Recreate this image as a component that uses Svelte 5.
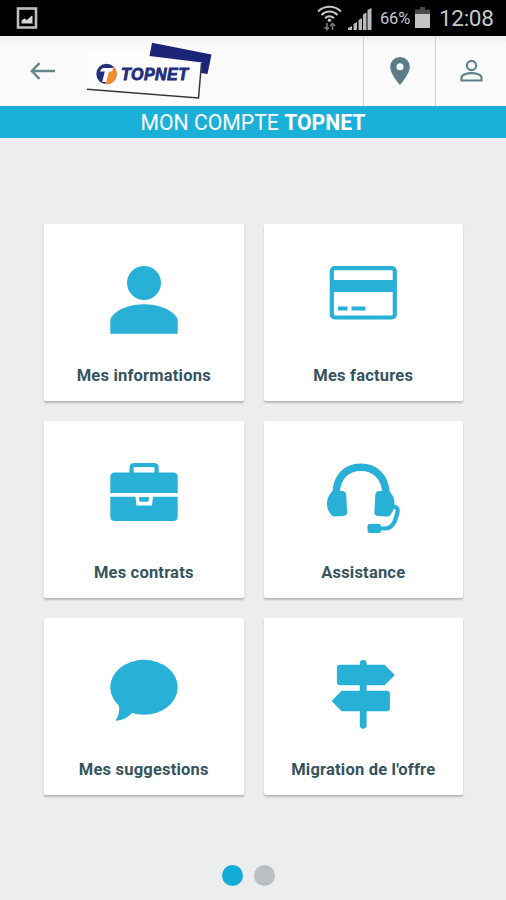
<script lang="ts">
  type IconName = 'user' | 'card' | 'briefcase' | 'headset' | 'bubble' | 'signpost';

  interface Tile {
    label: string;
    icon: IconName;
  }

  const tiles: Tile[] = [
    { label: 'Mes informations', icon: 'user' },
    { label: 'Mes factures', icon: 'card' },
    { label: 'Mes contrats', icon: 'briefcase' },
    { label: 'Assistance', icon: 'headset' },
    { label: 'Mes suggestions', icon: 'bubble' },
    { label: "Migration de l'offre", icon: 'signpost' },
  ];

  let page = $state(0);
</script>

<div class="screen">
  <div class="status-bar">
    <svg class="picture" width="22" height="24" viewBox="0 0 22 24">
      <rect x="2" y="2.500" width="18" height="19" fill="none" stroke="#bdbdbd" stroke-width="2.600" />
      <path d="M5.500 17.500v-3l3-2 2.500 1.500 5-4.500.5.500v7.500z" fill="#d5d5d5" />
    </svg>
    <div class="status-right">
      <svg class="wifi" width="26" height="26" viewBox="0 0 26 26">
        <g fill="none" stroke="#c4c4c4" stroke-width="2">
          <path d="M1 6.500C7.500.2 17.500.2 24 6.500" />
          <path d="M4.500 10c4.500-4.600 11.500-4.600 16 0" />
          <path d="M8 13.300c2.500-2.700 6.500-2.700 9 0" />
        </g>
        <circle cx="12.500" cy="15.200" r="1.700" fill="#c4c4c4" />
        <path d="M10 18v6.500M7.500 22l2.500 2.500 2-2M15.500 25v-6.500M13 21l2.500-2.500 2.500 2.500" fill="none" stroke="#777" stroke-width="1.600" />
      </svg>
      <svg class="signal" width="26" height="24" viewBox="0 0 26 24">
        <path d="M1 24v-2l4-2v4zM6.500 24v-6l3.500-2v8zM11.500 24V14l3.500-2v12zM16 24V8.500l3.500-2V24zM20.500 24V4l4-2v22z" fill="#b9b9b9" />
      </svg>
      <span class="percent">66%</span>
      <svg class="battery" width="15" height="22" viewBox="0 0 15 22">
        <path d="M5 0h5v2.500h5V7H0V2.500h5z" fill="#4a4a4a" />
        <path d="M0 7h15v14H0z" fill="#c4c4c4" />
      </svg>
      <span class="clock">12:08</span>
    </div>
  </div>

  <header class="toolbar">
    <button class="back" type="button" aria-label="Retour">
      <svg width="26" height="18" viewBox="0 0 26 18">
        <path d="M25 9H2M9.500 1.200L1.800 9l7.700 7.800" fill="none" stroke="#64868e" stroke-width="2.400" />
      </svg>
    </button>
    <svg class="logo" width="130" height="60" viewBox="0 0 130 60">
      <path d="M1 10H64V15L115 20 113 56 1 48z" fill="#fdfdfd" />
      <path d="M66 1.800L125.500 13.500 121.500 33 115 32 116 21.500 63.500 15z" fill="#1c2478" />
      <path d="M1 48.200L112.500 57 115.500 22" fill="none" stroke="#373737" stroke-width="1.500" />
      <circle cx="20.500" cy="33" r="10.200" fill="#232d7b" />
      <path d="M27.500 25.600A10.200 10.200 0 0 1 19 43.100L22.500 31z" fill="#f28c2c" />
      <path d="M14 30.500q1-3.500 4-3.500h9l-.8 3.500h-3.200l-2.800 10.500h-4l2.600-10.500z" fill="#fff" />
      <text x="35" y="39.300" textLength="67" lengthAdjust="spacing">TOPNET</text>
    </svg>
    <div class="actions">
      <button type="button" aria-label="Agences">
        <svg width="20" height="28" viewBox="0 0 20 28">
          <path d="M10 0A9.800 9.800 0 0 0 .2 9.800C.2 17.200 10 28 10 28s9.800-10.800 9.800-18.200A9.800 9.800 0 0 0 10 0zm0 13.300a3.500 3.500 0 1 1 0-7 3.500 3.500 0 0 1 0 7z" fill="#5b7c88" />
        </svg>
      </button>
      <button type="button" aria-label="Profil">
        <svg width="24" height="24" viewBox="0 0 24 24">
          <circle cx="12.500" cy="6.500" r="4.600" fill="none" stroke="#5f838b" stroke-width="2.200" />
          <path d="M2.500 21.500v-3c0-3 6-4.300 10-4.300s10 1.300 10 4.300v3z" fill="none" stroke="#5f838b" stroke-width="2.200" />
        </svg>
      </button>
    </div>
  </header>

  <h1 class="banner">MON COMPTE <b>TOPNET</b></h1>

  <main class="tiles">
    {#each tiles as tile}
      <button class="tile" type="button">
        <svg class="icon" width="80" height="80" viewBox="0 0 80 80">
          {#if tile.icon === 'user'}
            <circle cx="40" cy="23" r="17" />
            <path d="M6.300 73.700V60q0-2 1.500-3.300C14 48.500 27 44.300 40 44.300s26 4.200 32.200 12.400q1.500 1.300 1.500 3.300v13.700z" />
          {:else if tile.icon === 'card'}
            <rect class="line" x="8.800" y="8.200" width="63" height="49.300" rx="3" />
            <path d="M7.500 20h65v12H7.500zM15 46.500h9.500v4H15zM28.500 46.500h14v4h-14z" />
          {:else if tile.icon === 'briefcase'}
            <path d="M6.300 36V20q0-4.500 4.500-4.500h58.400q4.500 0 4.500 4.500v16zM6.300 39.800H31.500L32.500 48.500H48l1-8.700h24.700V59.500q0 4.500-4.500 4.500H10.800q-4.500 0-4.500-4.500z" />
            <path d="M35 40h10l-.5 4.700h-9z" />
            <path class="line" d="M27.600 16.500V10.500q0-2.500 2.500-2.500h20q2.500 0 2.500 2.500v6" />
          {:else if tile.icon === 'headset'}
            <g transform="translate(1 0)">
              <path class="line band" d="M12 36C13 20 22 10.200 36.800 10.200S61 20 62 36" />
              <path d="M10.500 34H18q4 0 4.300 4l.8 17q.1 4-4 4l-8.500.5q-3 0-4-2.500Q3 53 3 46.500q0-5.500 3-9.500 1.500-3 4.500-3z" />
              <path d="M63 34h-7.500q-4 0-4.200 4l-.9 17q-.1 4 4 4l8.500.5q3 0 4-2.500Q70.500 53 70.500 46.500q0-5.500-3-9.500-1.500-3-4.500-3z" />
              <path class="line" d="M68.500 49.500c4 0 5.700 2 5 5.500C71.500 64 69 71.500 60.500 71.500H54" />
              <rect x="43.500" y="67" width="13.500" height="9" rx="2.200" />
            </g>
          {:else if tile.icon === 'bubble'}
            <ellipse cx="40" cy="33.300" rx="33.700" ry="27.500" />
            <path d="M13 48c3 3 3.500 11-1.500 18.700C18 66.500 23.500 64 28.500 58.500z" />
          {:else}
            <g transform="translate(.6 0)">
              <rect x="36.200" y="6" width="6.800" height="68.700" rx="3.400" />
              <path d="M16.300 10.700H61L71.300 21 61 31.300H16.300q-3 0-3-3V13.700q0-3 3-3zM63.300 36.700H18L8 47l10 10.300h45.300q3 0 3-3V39.700q0-3-3-3z" />
            </g>
          {/if}
        </svg>
        <span class="label">{tile.label}</span>
      </button>
    {/each}
  </main>

  <nav class="dots">
    {#each [0, 1] as n}
      <button class="dot" class:active={page === n} type="button" aria-label="Page {n + 1}" onclick={() => (page = n)}></button>
    {/each}
  </nav>
</div>

<style>
  :global(body) {
    margin: 0;
  }

  .screen {
    display: flex;
    flex-direction: column;
    width: 506px;
    height: 900px;
    overflow: hidden;
    background: #ebedef;
    font-family: Roboto, 'Liberation Sans', sans-serif;
  }

  button {
    padding: 0;
    border: 0;
    background: none;
    font: inherit;
  }

  svg {
    display: block;
    flex-shrink: 0;
  }

  .status-bar {
    display: flex;
    align-items: center;
    justify-content: space-between;
    height: 36px;
    flex-shrink: 0;
    padding: 0 11px 0 16px;
    background: #000;
    color: #c8c8c8;
  }

  .status-right {
    display: flex;
    align-items: center;
  }

  .signal {
    margin-left: 4px;
  }

  .percent {
    margin-left: 7px;
    width: 32px;
    font-size: 16.5px;
    letter-spacing: -0.2px;
  }

  .battery {
    margin-left: 3px;
  }

  .clock {
    margin-left: 9px;
    width: 56px;
    font-size: 22.5px;
    letter-spacing: -0.3px;
  }

  .toolbar {
    display: flex;
    align-items: stretch;
    height: 70px;
    flex-shrink: 0;
    background: linear-gradient(#ededed, #fafafa 8px);
  }

  .back {
    display: flex;
    align-items: center;
    padding-left: 30px;
  }

  .logo {
    align-self: flex-start;
    margin: 5px 0 0 30px;
  }

  .logo text {
    font-family: 'Liberation Sans', sans-serif;
    font-size: 16px;
    font-weight: 700;
    font-style: italic;
    fill: #222c7c;
    stroke: #222c7c;
    stroke-width: 0.8px;
  }

  .actions {
    display: flex;
    margin-left: auto;
  }

  .actions button {
    display: flex;
    align-items: center;
    justify-content: center;
    box-sizing: border-box;
    width: 72px;
    border-left: 1px solid #d4d4d4;
  }

  .actions button:last-child {
    width: 71px;
  }

  .banner {
    height: 32px;
    flex-shrink: 0;
    margin: 0;
    background: #1bb0d7;
    color: #fff;
    font-size: 21.2px;
    font-weight: 400;
    line-height: 34px;
    text-align: center;
    white-space: pre;
  }

  .banner b {
    font-weight: 700;
  }

  .tiles {
    display: grid;
    grid-template-columns: 199.5px 199.5px;
    grid-auto-rows: 177px;
    gap: 20px;
    padding: 86px 0 0 44px;
  }

  .tile {
    display: flex;
    flex-direction: column;
    align-items: center;
    padding-top: 36px;
    border-radius: 2px;
    background: #fff;
    box-shadow: 0 2px 2px rgba(0, 0, 0, 0.22);
  }

  .icon {
    fill: #29b0d7;
  }

  .icon .line {
    fill: none;
    stroke: #29b0d7;
    stroke-width: 4.2px;
  }

  .icon .band {
    stroke-width: 7.5px;
  }

  .label {
    margin-top: 25px;
    color: #34545f;
    font-size: 16.5px;
    font-weight: 700;
    line-height: 22px;
    letter-spacing: 0.2px;
  }

  .dots {
    display: flex;
    justify-content: center;
    gap: 11px;
    margin-top: 70px;
    padding-right: 10px;
  }

  .dot {
    width: 21px;
    height: 21px;
    border-radius: 50%;
    background: #babfc2;
  }

  .dot.active {
    background: #13acd6;
  }
</style>
